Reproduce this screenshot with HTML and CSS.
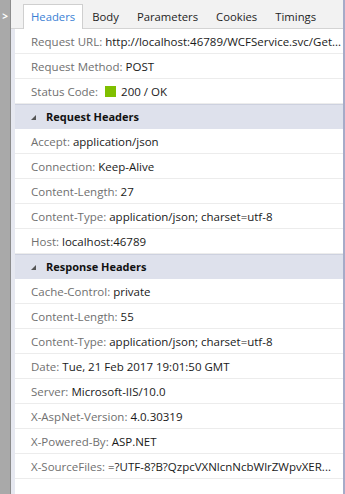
FILE: index.html
```
<!DOCTYPE html>
<html>
<head>
    <title>Headers</title>
    <link rel="stylesheet" href="styles.css">
    <meta name="viewport" content="width=device-width, initial-scale=1.0">
</head>
<body>
    <div id="container">
        <div class="gutter">&gt;</div>
        <div class="panel">
            <div class="tabs">
                <span class="tab active">Headers</span>
                <span class="tab">Body</span>
                <span class="tab">Parameters</span>
                <span class="tab">Cookies</span>
                <span class="tab">Timings</span>
            </div>
            <div class="content">
                <div class="row"><span class="key">Request URL:</span> <span class="val">http://localhost:46789/WCFService.svc/Get...</span></div>
                <div class="row"><span class="key">Request Method:</span> <span class="val">POST</span></div>
                <div class="row"><span class="key">Status Code:</span> <span class="status"></span><span class="val">200 / OK</span></div>

                <div class="section"><span class="arrow"></span>Request Headers</div>
                <div class="row"><span class="key">Accept:</span> <span class="val">application/json</span></div>
                <div class="row"><span class="key">Connection:</span> <span class="val">Keep-Alive</span></div>
                <div class="row"><span class="key">Content-Length:</span> <span class="val">27</span></div>
                <div class="row"><span class="key">Content-Type:</span> <span class="val">application/json; charset=utf-8</span></div>
                <div class="row"><span class="key">Host:</span> <span class="val">localhost:46789</span></div>

                <div class="section"><span class="arrow"></span>Response Headers</div>
                <div class="row"><span class="key">Cache-Control:</span> <span class="val">private</span></div>
                <div class="row"><span class="key">Content-Length:</span> <span class="val">55</span></div>
                <div class="row"><span class="key">Content-Type:</span> <span class="val">application/json; charset=utf-8</span></div>
                <div class="row"><span class="key">Date:</span> <span class="val">Tue, 21 Feb 2017 19:01:50 GMT</span></div>
                <div class="row"><span class="key">Server:</span> <span class="val">Microsoft-IIS/10.0</span></div>
                <div class="row"><span class="key">X-AspNet-Version:</span> <span class="val">4.0.30319</span></div>
                <div class="row"><span class="key">X-Powered-By:</span> <span class="val">ASP.NET</span></div>
                <div class="row"><span class="key">X-SourceFiles:</span> <span class="val">=?UTF-8?B?QzpcVXNlcnNcbWlrZWpvXER...</span></div>
            </div>
        </div>
    </div>
</body>
</html>
```

FILE: styles.css
```
html {
    font-family: "Open Sans", "Noto Sans", sans-serif;
}
body {
    margin: 0;
    background: #fff;
}
#container {
    display: flex;
    width: 345px;
    height: 494px;
    overflow: hidden;
}

.gutter {
    width: 11px;
    flex: none;
    background: #a9a9a9;
    border-right: 1px solid #8c8c8c;
    color: #fff;
    font-size: 10px;
    font-weight: bold;
    text-align: center;
    padding-top: 11px;
    box-sizing: border-box;
    line-height: 10px;
}

.panel {
    flex: 1;
    min-width: 0;
    display: flex;
    flex-direction: column;
    border-right: 2px solid #a6abc8;
}

.tabs {
    height: 29px;
    flex: none;
    background: #f2f2f2;
    border-bottom: 1px solid #d4d4d4;
    box-sizing: border-box;
    display: flex;
    align-items: flex-end;
    padding-left: 12px;
    font-size: 11.3px;
}
.tab {
    padding: 0 8px;
    height: 24px;
    line-height: 23px;
    color: #1e1e1e;
    margin-bottom: -1px;
    border: 1px solid transparent;
    border-bottom: none;
}
.tab.active {
    background: #fff;
    color: #3a7fd5;
    border-color: #cfcfcf;
    padding: 0 7px;
}

.content {
    flex: 1;
    background: #fff;
    border-left: 4px solid #e6e8f0;
    font-size: 11.5px;
}

.row {
    height: 24px;
    line-height: 25px;
    padding-left: 16px;
    border-bottom: 1px solid #ececec;
    white-space: nowrap;
    overflow: hidden;
    color: #1a1a1a;
}
.key {
    color: #707070;
}
.status {
    display: inline-block;
    width: 11px;
    height: 11px;
    background: #7fbf00;
    vertical-align: -1px;
    margin: 0 5px 0 4px;
}

.section {
    height: 24px;
    line-height: 24px;
    background: #dee1ec;
    border-top: 1px solid #cdd1df;
    font-size: 11px;
    font-weight: bold;
    color: #111;
    padding-left: 16px;
}
.arrow {
    display: inline-block;
    width: 0;
    height: 0;
    border-left: 5px solid transparent;
    border-bottom: 5px solid #555;
    margin-right: 10px;
    vertical-align: 1px;
}
```
